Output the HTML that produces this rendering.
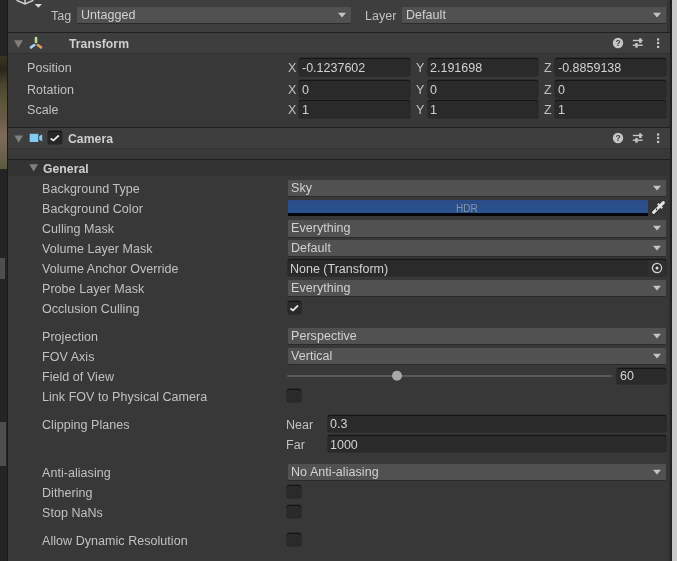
<!DOCTYPE html>
<html><head><meta charset="utf-8"><style>
html,body{margin:0;padding:0;width:677px;height:561px;overflow:hidden;background:#383838;}
body{position:relative;font-family:"Liberation Sans",sans-serif;}
div,span,svg{position:absolute;}
svg{will-change:transform;}
.t{white-space:nowrap;line-height:1;will-change:transform;letter-spacing:0.05px;}
</style></head><body>
<div style="left:0px;top:0px;width:7px;height:561px;background:#242424;"></div>
<div style="left:0px;top:56px;width:7px;height:113px;background:linear-gradient(180deg,#3a3422 0%,#2a2519 12%,#4a4430 25%,#5a5538 40%,#6a5a48 55%,#7e6a58 70%,#6e6450 85%,#5a5a40 100%);"></div>
<div style="left:0px;top:258px;width:5px;height:21px;background:#4e4e4e;"></div>
<div style="left:0px;top:422px;width:6px;height:44px;background:#4e4e4e;"></div>
<div style="left:6.5px;top:0px;width:1.5px;height:561px;background:#1a1a1a;"></div>
<div style="left:8px;top:0px;width:662px;height:561px;background:#383838;"></div>
<div style="left:8px;top:0px;width:662px;height:32px;background:#3e3e3e;"></div>
<div style="left:667px;top:0px;width:3px;height:561px;background:#353535;"></div>
<div style="left:670px;top:0px;width:2px;height:561px;background:#222222;"></div>
<div style="left:672px;top:0px;width:5px;height:561px;background:#cacaca;"></div>
<svg style="left:14px;top:0px;" width="22" height="8" viewBox="0 0 22 8"><polyline points="2.5,0.3 11,4 19.5,0.3" fill="none" stroke="#d0d0d0" stroke-width="1.5"/><line x1="11" y1="0" x2="11" y2="4" stroke="#d0d0d0" stroke-width="1.5"/></svg>
<svg style="left:34px;top:3px;" width="9" height="6" viewBox="0 0 9 6"><polygon points="0.6,1 8,1 4.3,4.8" fill="#d8d8d8"/></svg>
<span class="t" style="left:50.5px;top:9.52px;font-size:12.5px;color:#c1c1c1;">Tag</span>
<div style="left:77px;top:7px;width:274px;height:16px;background:#515151;border-radius:1px;box-shadow:0 1px 0 #2b2b2b;"></div>
<span class="t" style="left:80.5px;top:8.82px;font-size:12.5px;color:#d2d2d2;">Untagged</span>
<svg style="left:337.2px;top:12.2px;" width="10" height="7" viewBox="0 0 10 7"><polygon points="1,0.7 9,0.7 5,5.5" fill="#c4c4c4"/></svg>
<span class="t" style="left:364.8px;top:9.52px;font-size:12.5px;color:#c1c1c1;">Layer</span>
<div style="left:402px;top:7px;width:263.5px;height:16px;background:#515151;border-radius:1px;box-shadow:0 1px 0 #2b2b2b;"></div>
<span class="t" style="left:405.5px;top:8.82px;font-size:12.5px;color:#d2d2d2;">Default</span>
<svg style="left:651.7px;top:12.2px;" width="10" height="7" viewBox="0 0 10 7"><polygon points="1,0.7 9,0.7 5,5.5" fill="#c4c4c4"/></svg>
<div style="left:8px;top:31.5px;width:662px;height:1.0px;background:#1f1f1f;"></div>
<div style="left:8px;top:32.5px;width:662px;height:20.0px;background:#3e3e3e;"></div>
<div style="left:8px;top:52.5px;width:662px;height:1.0px;background:#303030;"></div>
<svg style="left:13px;top:39px;" width="11" height="10" viewBox="0 0 11 10"><polygon points="1,1.2 9.8,1.2 5.4,8.9" fill="#7f7f7f"/></svg>
<svg style="left:28px;top:35px;" width="16" height="15" viewBox="0 0 16 15"><line x1="8" y1="3.0" x2="8" y2="6.9" stroke="#b5e28a" stroke-width="2.6" stroke-linecap="round"/><line x1="3" y1="12.4" x2="6.3" y2="10" stroke="#a9d2f2" stroke-width="2.6" stroke-linecap="round"/><line x1="9.7" y1="10" x2="13" y2="12.4" stroke="#e59a5c" stroke-width="2.6" stroke-linecap="round"/></svg>
<span class="t" style="left:68.9px;top:38.27px;font-size:12.2px;color:#c1c1c1;font-weight:bold;color:#cfcfcf;">Transform</span>
<svg style="left:611px;top:36px;" width="14" height="14" viewBox="0 0 14 14"><circle cx="7" cy="7" r="5.2" fill="#c6c6c6"/><text x="7" y="10.2" font-family="Liberation Sans" font-weight="bold" font-size="8.5" text-anchor="middle" fill="#3e3e3e">?</text></svg>
<svg style="left:631px;top:36px;" width="14" height="14" viewBox="0 0 14 14"><line x1="1.8" y1="4.5" x2="11.7" y2="4.5" stroke="#c6c6c6" stroke-width="1.4"/><line x1="9.3" y1="2.3" x2="9.3" y2="7" stroke="#c6c6c6" stroke-width="2.4"/><line x1="1.8" y1="9.2" x2="11.7" y2="9.2" stroke="#c6c6c6" stroke-width="1.4"/><line x1="5.5" y1="7" x2="5.5" y2="11.7" stroke="#c6c6c6" stroke-width="2.4"/></svg>
<svg style="left:655.8px;top:36px;" width="6" height="14" viewBox="0 0 6 14"><rect x="1" y="2.4" width="2.2" height="2.2" fill="#c6c6c6"/><rect x="1" y="5.9" width="2.2" height="2.2" fill="#c6c6c6"/><rect x="1" y="9.8" width="2.2" height="2.2" fill="#c6c6c6"/></svg>
<span class="t" style="left:26.7px;top:61.92px;font-size:12.5px;color:#c1c1c1;">Position</span>
<span class="t" style="left:287.5px;top:61.92px;font-size:12.5px;color:#c1c1c1;">X</span>
<div style="left:299px;top:58px;width:111px;height:17.799999999999997px;background:#2a2a2a;border-radius:2px;box-shadow:inset 0 1px 0 #161616, 0 0 0 0.5px #232323;"></div>
<span class="t" style="left:301.5px;top:62.22px;font-size:12.5px;color:#d2d2d2;letter-spacing:0;">-0.1237602</span>
<span class="t" style="left:416.2px;top:61.92px;font-size:12.5px;color:#c1c1c1;">Y</span>
<div style="left:428px;top:58px;width:110px;height:17.799999999999997px;background:#2a2a2a;border-radius:2px;box-shadow:inset 0 1px 0 #161616, 0 0 0 0.5px #232323;"></div>
<span class="t" style="left:430.3px;top:62.22px;font-size:12.5px;color:#d2d2d2;letter-spacing:0;">2.191698</span>
<span class="t" style="left:543.9000000000001px;top:61.92px;font-size:12.5px;color:#c1c1c1;">Z</span>
<div style="left:555px;top:58px;width:111px;height:17.799999999999997px;background:#2a2a2a;border-radius:2px;box-shadow:inset 0 1px 0 #161616, 0 0 0 0.5px #232323;"></div>
<span class="t" style="left:557.5px;top:62.22px;font-size:12.5px;color:#d2d2d2;letter-spacing:0;">-0.8859138</span>
<span class="t" style="left:26.7px;top:83.92px;font-size:12.5px;color:#c1c1c1;">Rotation</span>
<span class="t" style="left:287.5px;top:83.92px;font-size:12.5px;color:#c1c1c1;">X</span>
<div style="left:299px;top:80px;width:111px;height:17.599999999999994px;background:#2a2a2a;border-radius:2px;box-shadow:inset 0 1px 0 #161616, 0 0 0 0.5px #232323;"></div>
<span class="t" style="left:301.5px;top:84.22px;font-size:12.5px;color:#d2d2d2;letter-spacing:0;">0</span>
<span class="t" style="left:416.2px;top:83.92px;font-size:12.5px;color:#c1c1c1;">Y</span>
<div style="left:428px;top:80px;width:110px;height:17.599999999999994px;background:#2a2a2a;border-radius:2px;box-shadow:inset 0 1px 0 #161616, 0 0 0 0.5px #232323;"></div>
<span class="t" style="left:430.3px;top:84.22px;font-size:12.5px;color:#d2d2d2;letter-spacing:0;">0</span>
<span class="t" style="left:543.9000000000001px;top:83.92px;font-size:12.5px;color:#c1c1c1;">Z</span>
<div style="left:555px;top:80px;width:111px;height:17.599999999999994px;background:#2a2a2a;border-radius:2px;box-shadow:inset 0 1px 0 #161616, 0 0 0 0.5px #232323;"></div>
<span class="t" style="left:557.5px;top:84.22px;font-size:12.5px;color:#d2d2d2;letter-spacing:0;">0</span>
<span class="t" style="left:26.7px;top:103.92px;font-size:12.5px;color:#c1c1c1;">Scale</span>
<span class="t" style="left:287.5px;top:103.92px;font-size:12.5px;color:#c1c1c1;">X</span>
<div style="left:299px;top:100px;width:111px;height:17.599999999999994px;background:#2a2a2a;border-radius:2px;box-shadow:inset 0 1px 0 #161616, 0 0 0 0.5px #232323;"></div>
<span class="t" style="left:301.5px;top:104.22px;font-size:12.5px;color:#d2d2d2;letter-spacing:0;">1</span>
<span class="t" style="left:416.2px;top:103.92px;font-size:12.5px;color:#c1c1c1;">Y</span>
<div style="left:428px;top:100px;width:110px;height:17.599999999999994px;background:#2a2a2a;border-radius:2px;box-shadow:inset 0 1px 0 #161616, 0 0 0 0.5px #232323;"></div>
<span class="t" style="left:430.3px;top:104.22px;font-size:12.5px;color:#d2d2d2;letter-spacing:0;">1</span>
<span class="t" style="left:543.9000000000001px;top:103.92px;font-size:12.5px;color:#c1c1c1;">Z</span>
<div style="left:555px;top:100px;width:111px;height:17.599999999999994px;background:#2a2a2a;border-radius:2px;box-shadow:inset 0 1px 0 #161616, 0 0 0 0.5px #232323;"></div>
<span class="t" style="left:557.5px;top:104.22px;font-size:12.5px;color:#d2d2d2;letter-spacing:0;">1</span>
<div style="left:8px;top:126.5px;width:662px;height:1.0px;background:#1f1f1f;"></div>
<div style="left:8px;top:127.5px;width:662px;height:20.5px;background:#3e3e3e;"></div>
<div style="left:8px;top:148px;width:662px;height:1px;background:#333333;"></div>
<div style="left:8px;top:149px;width:662px;height:9.5px;background:#393939;"></div>
<svg style="left:13px;top:134px;" width="11" height="10" viewBox="0 0 11 10"><polygon points="1.4,1.4 10,1.4 5.7,8.7" fill="#7f7f7f"/></svg>
<svg style="left:28px;top:132px;" width="16" height="12" viewBox="0 0 16 12"><rect x="1.7" y="1.8" width="8.6" height="8.2" fill="#80ccf4"/><polygon points="11.2,4.3 14.2,2.2 14.2,9.6 11.2,7.6" fill="#80ccf4"/></svg>
<div style="left:47.8px;top:131px;width:14.200000000000003px;height:13.300000000000011px;background:#262626;border-radius:2px;box-shadow:inset 0 1px 0 #141414, 0 0 0 0.5px #232323;"></div>
<svg style="left:47.8px;top:131px;" width="14" height="13" viewBox="0 0 14 13"><polyline points="2.6,7.6 5.4,9.4 10.8,4.5" fill="none" stroke="#e6e6e6" stroke-width="1.8"/></svg>
<span class="t" style="left:68.3px;top:133.27px;font-size:12.2px;color:#c1c1c1;font-weight:bold;color:#cfcfcf;">Camera</span>
<svg style="left:611px;top:131px;" width="14" height="14" viewBox="0 0 14 14"><circle cx="7" cy="7" r="5.2" fill="#c6c6c6"/><text x="7" y="10.2" font-family="Liberation Sans" font-weight="bold" font-size="8.5" text-anchor="middle" fill="#3e3e3e">?</text></svg>
<svg style="left:631px;top:131px;" width="14" height="14" viewBox="0 0 14 14"><line x1="1.8" y1="4.5" x2="11.7" y2="4.5" stroke="#c6c6c6" stroke-width="1.4"/><line x1="9.3" y1="2.3" x2="9.3" y2="7" stroke="#c6c6c6" stroke-width="2.4"/><line x1="1.8" y1="9.2" x2="11.7" y2="9.2" stroke="#c6c6c6" stroke-width="1.4"/><line x1="5.5" y1="7" x2="5.5" y2="11.7" stroke="#c6c6c6" stroke-width="2.4"/></svg>
<svg style="left:655.8px;top:131px;" width="6" height="14" viewBox="0 0 6 14"><rect x="1" y="2.4" width="2.2" height="2.2" fill="#c6c6c6"/><rect x="1" y="5.9" width="2.2" height="2.2" fill="#c6c6c6"/><rect x="1" y="9.8" width="2.2" height="2.2" fill="#c6c6c6"/></svg>
<div style="left:8px;top:158.5px;width:662px;height:1.0px;background:#1f1f1f;"></div>
<div style="left:8px;top:159.5px;width:662px;height:16.5px;background:#333333;"></div>
<svg style="left:28px;top:163px;" width="11" height="10" viewBox="0 0 11 10"><polygon points="1.3,1.3 10,1.3 5.6,8.5" fill="#7f7f7f"/></svg>
<span class="t" style="left:43.4px;top:162.67px;font-size:12.2px;color:#c1c1c1;font-weight:bold;color:#cfcfcf;">General</span>
<span class="t" style="left:41.6px;top:182.92px;font-size:12.5px;color:#c1c1c1;">Background Type</span>
<span class="t" style="left:41.6px;top:202.82px;font-size:12.5px;color:#c1c1c1;">Background Color</span>
<span class="t" style="left:41.6px;top:222.92px;font-size:12.5px;color:#c1c1c1;">Culling Mask</span>
<span class="t" style="left:41.6px;top:243.22px;font-size:12.5px;color:#c1c1c1;">Volume Layer Mask</span>
<span class="t" style="left:41.6px;top:263.02px;font-size:12.5px;color:#c1c1c1;">Volume Anchor Override</span>
<span class="t" style="left:41.6px;top:283.12px;font-size:12.5px;color:#c1c1c1;">Probe Layer Mask</span>
<span class="t" style="left:41.6px;top:302.92px;font-size:12.5px;color:#c1c1c1;">Occlusion Culling</span>
<span class="t" style="left:41.6px;top:331.02px;font-size:12.5px;color:#c1c1c1;">Projection</span>
<span class="t" style="left:41.6px;top:350.82px;font-size:12.5px;color:#c1c1c1;">FOV Axis</span>
<span class="t" style="left:41.6px;top:371.12px;font-size:12.5px;color:#c1c1c1;">Field of View</span>
<span class="t" style="left:41.6px;top:390.92px;font-size:12.5px;color:#c1c1c1;">Link FOV to Physical Camera</span>
<span class="t" style="left:41.6px;top:418.72px;font-size:12.5px;color:#c1c1c1;">Clipping Planes</span>
<span class="t" style="left:41.6px;top:466.92px;font-size:12.5px;color:#c1c1c1;">Anti-aliasing</span>
<span class="t" style="left:41.6px;top:487.12px;font-size:12.5px;color:#c1c1c1;">Dithering</span>
<span class="t" style="left:41.6px;top:506.92px;font-size:12.5px;color:#c1c1c1;">Stop NaNs</span>
<span class="t" style="left:41.6px;top:535.42px;font-size:12.5px;color:#c1c1c1;">Allow Dynamic Resolution</span>
<div style="left:288px;top:179.5px;width:377.5px;height:16.5px;background:#515151;border-radius:1px;box-shadow:0 1px 0 #2b2b2b;"></div>
<span class="t" style="left:291.3px;top:181.57px;font-size:12.5px;color:#d2d2d2;">Sky</span>
<svg style="left:651.7px;top:184.95px;" width="10" height="7" viewBox="0 0 10 7"><polygon points="1,0.7 9,0.7 5,5.5" fill="#c4c4c4"/></svg>
<div style="left:288px;top:199.5px;width:360px;height:13.5px;background:linear-gradient(180deg,#2c4a88,#29548e);"></div>
<div style="left:288px;top:213px;width:360px;height:3px;background:#05050c;"></div>
<div style="left:648px;top:199.5px;width:18px;height:16.5px;background:#353535;"></div>
<span class="t" style="left:456px;top:204.34px;font-size:10px;color:#8494aa;letter-spacing:0;">HDR</span>
<svg style="left:650px;top:199px;" width="16" height="17" viewBox="0 0 16 17"><line x1="3.6" y1="13.4" x2="9.3" y2="7.7" stroke="#1a1a1a" stroke-width="4.4" stroke-linecap="round" opacity="0.5"/><line x1="3.6" y1="13.4" x2="9.3" y2="7.7" stroke="#e4e4e4" stroke-width="3" stroke-linecap="round"/><circle cx="6.6" cy="10.4" r="0.8" fill="#2a2a2a"/><line x1="7.8" y1="4.8" x2="12.2" y2="9.2" stroke="#e4e4e4" stroke-width="2"/><line x1="10.6" y1="6.4" x2="13.4" y2="3.6" stroke="#e4e4e4" stroke-width="3" stroke-linecap="round"/></svg>
<div style="left:288px;top:220px;width:377.5px;height:16.5px;background:#515151;border-radius:1px;box-shadow:0 1px 0 #2b2b2b;"></div>
<span class="t" style="left:291.3px;top:222.07px;font-size:12.5px;color:#d2d2d2;">Everything</span>
<svg style="left:651.7px;top:225.45px;" width="10" height="7" viewBox="0 0 10 7"><polygon points="1,0.7 9,0.7 5,5.5" fill="#c4c4c4"/></svg>
<div style="left:288px;top:240px;width:377.5px;height:16.30000000000001px;background:#515151;border-radius:1px;box-shadow:0 1px 0 #2b2b2b;"></div>
<span class="t" style="left:291.3px;top:241.97px;font-size:12.5px;color:#d2d2d2;">Default</span>
<svg style="left:651.7px;top:245.35px;" width="10" height="7" viewBox="0 0 10 7"><polygon points="1,0.7 9,0.7 5,5.5" fill="#c4c4c4"/></svg>
<div style="left:288px;top:258.8px;width:378px;height:17.399999999999977px;background:#2a2a2a;border-radius:2px;box-shadow:inset 0 1px 0 #161616, 0 0 0 0.5px #232323;"></div>
<span class="t" style="left:290px;top:262.62px;font-size:12.5px;color:#d2d2d2;letter-spacing:0;">None (Transform)</span>
<div style="left:648px;top:258.8px;width:18px;height:17.399999999999977px;background:#2f2f2f;border-radius:0 2px 2px 0;box-shadow:inset 0 1px 0 #161616;"></div>
<svg style="left:650px;top:261px;" width="14" height="14" viewBox="0 0 14 14"><circle cx="7" cy="7" r="4.6" fill="none" stroke="#d0d0d0" stroke-width="1.3"/><circle cx="7" cy="7" r="1.5" fill="#e0e0e0"/></svg>
<div style="left:288px;top:280px;width:377.5px;height:16.399999999999977px;background:#515151;border-radius:1px;box-shadow:0 1px 0 #2b2b2b;"></div>
<span class="t" style="left:291.3px;top:282.02px;font-size:12.5px;color:#d2d2d2;">Everything</span>
<svg style="left:651.7px;top:285.4px;" width="10" height="7" viewBox="0 0 10 7"><polygon points="1,0.7 9,0.7 5,5.5" fill="#c4c4c4"/></svg>
<div style="left:287.7px;top:301.1px;width:13.100000000000023px;height:13.099999999999966px;background:#2a2a2a;border-radius:2px;box-shadow:inset 0 1px 0 #141414, 0 0 0 0.5px #232323;"></div>
<svg style="left:287.7px;top:301.1px;" width="13" height="13" viewBox="0 0 13 13"><polyline points="2.4,7.5 5.0,9.3 10.0,4.5" fill="none" stroke="#e6e6e6" stroke-width="1.8"/></svg>
<div style="left:288px;top:328.3px;width:377.5px;height:15.899999999999977px;background:#515151;border-radius:1px;box-shadow:0 1px 0 #2b2b2b;"></div>
<span class="t" style="left:291.3px;top:330.07px;font-size:12.5px;color:#d2d2d2;">Perspective</span>
<svg style="left:651.7px;top:333.45px;" width="10" height="7" viewBox="0 0 10 7"><polygon points="1,0.7 9,0.7 5,5.5" fill="#c4c4c4"/></svg>
<div style="left:288px;top:348px;width:377.5px;height:16.30000000000001px;background:#515151;border-radius:1px;box-shadow:0 1px 0 #2b2b2b;"></div>
<span class="t" style="left:291.3px;top:349.97px;font-size:12.5px;color:#d2d2d2;">Vertical</span>
<svg style="left:651.7px;top:353.34999999999997px;" width="10" height="7" viewBox="0 0 10 7"><polygon points="1,0.7 9,0.7 5,5.5" fill="#c4c4c4"/></svg>
<div style="left:287px;top:374.6px;width:325px;height:2.0px;background:#5a5a5a;border-radius:1px;"></div>
<svg style="left:391px;top:370px;" width="12" height="12" viewBox="0 0 12 12"><circle cx="6" cy="5.8" r="5" fill="#a8a8a8"/></svg>
<div style="left:617px;top:367.6px;width:49px;height:16.599999999999966px;background:#2a2a2a;border-radius:2px;box-shadow:inset 0 1px 0 #161616, 0 0 0 0.5px #232323;"></div>
<span class="t" style="left:619.8px;top:369.72px;font-size:12.5px;color:#d2d2d2;letter-spacing:0;">60</span>
<div style="left:287.4px;top:388.6px;width:13.600000000000023px;height:13.399999999999977px;background:#2a2a2a;border-radius:2px;box-shadow:inset 0 1px 0 #141414, 0 0 0 0.5px #232323;"></div>
<span class="t" style="left:286.2px;top:419.02px;font-size:12.5px;color:#c1c1c1;">Near</span>
<div style="left:327.6px;top:415.2px;width:338.4px;height:17.19999999999999px;background:#2a2a2a;border-radius:2px;box-shadow:inset 0 1px 0 #161616, 0 0 0 0.5px #232323;"></div>
<span class="t" style="left:330px;top:418.42px;font-size:12.5px;color:#d2d2d2;letter-spacing:0;">0.3</span>
<span class="t" style="left:286.2px;top:439.42px;font-size:12.5px;color:#c1c1c1;">Far</span>
<div style="left:327.6px;top:435.2px;width:338.4px;height:17.0px;background:#2a2a2a;border-radius:2px;box-shadow:inset 0 1px 0 #161616, 0 0 0 0.5px #232323;"></div>
<span class="t" style="left:330px;top:438.62px;font-size:12.5px;color:#d2d2d2;letter-spacing:0;">1000</span>
<div style="left:288px;top:464px;width:377.5px;height:16px;background:#515151;border-radius:1px;box-shadow:0 1px 0 #2b2b2b;"></div>
<span class="t" style="left:291.3px;top:465.82px;font-size:12.5px;color:#d2d2d2;">No Anti-aliasing</span>
<svg style="left:651.7px;top:469.2px;" width="10" height="7" viewBox="0 0 10 7"><polygon points="1,0.7 9,0.7 5,5.5" fill="#c4c4c4"/></svg>
<div style="left:287.2px;top:484.9px;width:13.800000000000011px;height:13.100000000000023px;background:#2a2a2a;border-radius:2px;box-shadow:inset 0 1px 0 #141414, 0 0 0 0.5px #232323;"></div>
<div style="left:287.2px;top:504.6px;width:13.800000000000011px;height:13.699999999999932px;background:#2a2a2a;border-radius:2px;box-shadow:inset 0 1px 0 #141414, 0 0 0 0.5px #232323;"></div>
<div style="left:287.2px;top:532.6px;width:13.800000000000011px;height:13.399999999999977px;background:#2a2a2a;border-radius:2px;box-shadow:inset 0 1px 0 #141414, 0 0 0 0.5px #232323;"></div>
</body></html>
